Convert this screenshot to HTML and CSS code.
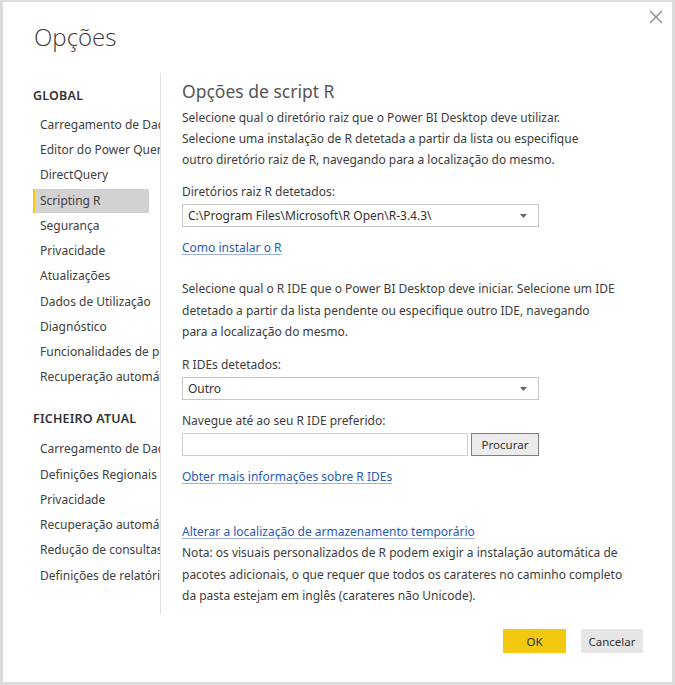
FILE: index.html
```html
<!DOCTYPE html>
<html lang="pt">
<head>
<meta charset="utf-8">
<title>Opções</title>
<link rel="stylesheet" href="styles.css">
</head>
<body>
<div class="dialog">
  <button class="close" aria-label="Fechar">
    <svg width="14" height="14" viewBox="0 0 14 14"><path d="M1 1L13 13M13 1L1 13" stroke="#8a8a8a" stroke-width="1.4" fill="none"/></svg>
  </button>
  <h1 class="title">Opções</h1>
  <div class="main">
    <nav class="sidebar">
      <div class="group-title">GLOBAL</div>
      <ul class="nav-list">
        <li>Carregamento de Dados</li>
        <li>Editor do Power Query</li>
        <li>DirectQuery</li>
        <li class="active">Scripting R</li>
        <li>Segurança</li>
        <li>Privacidade</li>
        <li>Atualizações</li>
        <li>Dados de Utilização</li>
        <li>Diagnóstico</li>
        <li>Funcionalidades de pré-visualização</li>
        <li>Recuperação automática</li>
      </ul>
      <div class="group-title second">FICHEIRO ATUAL</div>
      <ul class="nav-list">
        <li>Carregamento de Dados</li>
        <li>Definições Regionais</li>
        <li>Privacidade</li>
        <li>Recuperação automática</li>
        <li>Redução de consultas</li>
        <li>Definições de relatório</li>
      </ul>
    </nav>
    <section class="content">
      <h2 class="heading">Opções de script R</h2>
      <p class="para first">Selecione qual o diretório raiz que o Power BI Desktop deve utilizar.<br>Selecione uma instalação de R detetada a partir da lista ou especifique<br>outro diretório raiz de R, navegando para a localização do mesmo.</p>
      <div class="label l1">Diretórios raiz R detetados:</div>
      <div class="select">
        <span>C:\Program Files\Microsoft\R Open\R-3.4.3\</span>
        <svg class="arrow" width="7" height="4" viewBox="0 0 7 4"><path d="M0 0H7L3.5 4Z" fill="#666"/></svg>
      </div>
      <a class="link l-install" href="#">Como instalar o R</a>
      <p class="para second">Selecione qual o R IDE que o Power BI Desktop deve iniciar. Selecione um IDE<br>detetado a partir da lista pendente ou especifique outro IDE, navegando<br>para a localização do mesmo.</p>
      <div class="label l2">R IDEs detetados:</div>
      <div class="select">
        <span>Outro</span>
        <svg class="arrow" width="7" height="4" viewBox="0 0 7 4"><path d="M0 0H7L3.5 4Z" fill="#666"/></svg>
      </div>
      <div class="label l3">Navegue até ao seu R IDE preferido:</div>
      <div class="browse-row">
        <div class="input"></div>
        <button class="browse">Procurar</button>
      </div>
      <a class="link l-more" href="#">Obter mais informações sobre R IDEs</a>
      <a class="link l-temp" href="#">Alterar a localização de armazenamento temporário</a>
      <p class="para note">Nota: os visuais personalizados de R podem exigir a instalação automática de<br>pacotes adicionais, o que requer que todos os carateres no caminho completo<br>da pasta estejam em inglês (carateres não Unicode).</p>
    </section>
  </div>
  <footer class="footer">
    <button class="btn ok">OK</button>
    <button class="btn cancel">Cancelar</button>
  </footer>
</div>
</body>
</html>
```
FILE: styles.css
```css
* { box-sizing: border-box; }
html, body { margin: 0; padding: 0; background: #fff; }
body {
  font-family: "Noto Sans", "Open Sans", sans-serif;
  font-size: 12px;
  color: #3b3b3b;
}
.dialog {
  position: relative;
  width: 675px;
  height: 685px;
  border: 3px solid #dcdcdc;
  border-top-width: 2px;
  background: #fff;
  display: flex;
  flex-direction: column;
}
.close {
  position: absolute;
  top: 8px;
  right: 9px;
  width: 14px;
  height: 14px;
  padding: 0;
  border: 0;
  background: transparent;
  display: flex;
}
.title {
  margin: 0;
  padding: 18px 0 0 31px;
  height: 71px;
  font-family: "Open Sans", "Noto Sans", sans-serif;
  font-size: 24px;
  font-weight: 300;
  line-height: 34px;
  color: #3a3a3a;
}
.main {
  display: flex;
  height: 541px;
}
.sidebar {
  width: 158px;
  flex: none;
  border-right: 1px solid #e2e2e2;
  overflow: hidden;
  padding-left: 30px;
}
.group-title {
  margin-top: 13px;
  height: 20px;
  line-height: 20px;
  font-weight: 600;
  font-size: 12.5px;
  color: #333;
  letter-spacing: 0.2px;
  margin-bottom: 6.5px;
}
.group-title.second {
  margin-top: 18px;
  margin-bottom: 8.5px;
}
.nav-list {
  list-style: none;
  margin: 0;
  padding: 0;
}
.nav-list li {
  height: 25.3px;
  line-height: 24px;
  padding-left: 7px;
  white-space: nowrap;
  color: #404040;
}
.nav-list li.active {
  background: #d2d2d2;
  border-left: 2px solid #f2c811;
  padding-left: 5px;
  width: 116px;
  height: 24px;
  margin: 0.65px 0;
}
.content {
  flex: 1;
  padding-left: 21px;
  display: flex;
  flex-direction: column;
  align-items: flex-start;
}
.heading {
  margin: 6px 0 0;
  font-size: 17.5px;
  font-weight: 400;
  line-height: 24px;
  color: #555;
}
.para {
  margin: 0;
  line-height: 21.3px;
  white-space: nowrap;
  color: #3d3d3d;
}
.para.first { margin-top: 3.5px; }
.para.second { margin-top: 20px; }
.label {
  line-height: 21px;
  color: #3d3d3d;
}
.label.l1 { margin-top: 10.5px; }
.label.l2 { margin-top: 12px; }
.label.l3 { margin-top: 9.5px; }
.select {
  margin-top: 2px;
  width: 357px;
  height: 23px;
  border: 1px solid #c6c6c6;
  display: flex;
  align-items: center;
  justify-content: space-between;
  padding: 0 11px 0 5px;
  color: #333;
}
.arrow { margin-top: 1px; }
.link {
  line-height: 21px;
  color: #2a5bb8;
  text-decoration: underline;
  text-decoration-color: #9db3dd;
  text-underline-offset: 2px;
  height: 21px;
}
.l-install { margin-top: 10.5px; }
.l-more { margin-top: 10px; }
.l-temp { margin-top: 34px; }
.note { margin-top: 0; }
.browse-row {
  margin-top: 2.5px;
  display: flex;
  gap: 3px;
}
.input {
  width: 286px;
  height: 23px;
  border: 1px solid #cfcfcf;
}
.browse {
  width: 68px;
  height: 23px;
  border: 1px solid #7d7d7d;
  background: #ececec;
  font-family: inherit;
  font-size: 11.5px;
  color: #333;
  padding: 0;
}
.footer {
  display: flex;
  justify-content: flex-end;
  gap: 15px;
  padding: 15px 29px 0 0;
}
.btn {
  height: 24px;
  border: 0;
  padding: 0;
  font-family: inherit;
  font-size: 11.5px;
  color: #333;
}
.ok { width: 63px; background: #f2c811; }
.cancel { width: 62px; background: #e6e6e6; }
```
